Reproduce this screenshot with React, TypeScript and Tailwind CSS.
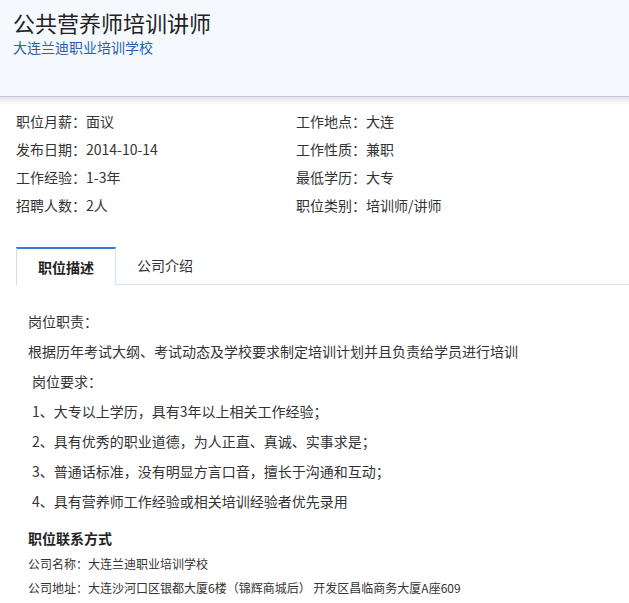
import React from "react";

const info: [string, string][] = [
  ["职位月薪：", "面议"],
  ["工作地点：", "大连"],
  ["发布日期：", "2014-10-14"],
  ["工作性质：", "兼职"],
  ["工作经验：", "1-3年"],
  ["最低学历：", "大专"],
  ["招聘人数：", "2人"],
  ["职位类别：", "培训师/讲师"],
];

const yaoqiu = [
  "1、大专以上学历，具有3年以上相关工作经验；",
  "2、具有优秀的职业道德，为人正直、真诚、实事求是；",
  "3、普通话标准，没有明显方言口音，擅长于沟通和互动；",
  "4、具有营养师工作经验或相关培训经验者优先录用",
];

export default function App() {
  return (
    <div
      className="w-[629px] h-[603px] overflow-hidden bg-white text-[#333]"
      style={{ fontFamily: '"Noto Sans CJK SC", "Liberation Sans", sans-serif' }}
    >
      {/* 头部 */}
      <div className="h-[97px] bg-[#f5f9fe] border-b border-[#bccbdb] px-[13px] pt-[7px]">
        <h1 className="text-[22px] leading-[30px] text-[#222]">公共营养师培训讲师</h1>
        <div className="text-[14px] leading-[20px] text-[#2b5fb3]">大连兰迪职业培训学校</div>
      </div>
      <div className="h-[8px] bg-gradient-to-b from-[#e6e6e6] to-white" />

      {/* 基本信息 */}
      <div className="grid grid-cols-[280px_1fr] pl-[16px] mt-[2px] text-[14px] leading-[28px]">
        {info.map(([k, v]) => (
          <div key={k}>
            {k}
            {v}
          </div>
        ))}
      </div>

      {/* 标签 */}
      <div className="flex ml-[16px] mt-[28px] border-b border-[#d3e3f6] h-[38px]">
        <div className="w-[100px] h-[38px] -mb-px bg-white border-t-2 border-t-[#3b78d0] border-l border-l-[#dcdcdc] border-r border-r-[#d3e3f6] flex items-center justify-center text-[14px] font-bold text-[#222]">
          职位描述
        </div>
        <div className="w-[98px] flex items-center justify-center text-[14px] text-[#333]">公司介绍</div>
      </div>

      {/* 描述 */}
      <div className="pl-[28px] pt-[21px] text-[14px] leading-[30px]">
        <div>岗位职责：</div>
        <div>根据历年考试大纲、考试动态及学校要求制定培训计划并且负责给学员进行培训</div>
        <div className="pl-[4px]">岗位要求：</div>
        {yaoqiu.map((t) => (
          <div key={t} className="pl-[4px]">
            {t}
          </div>
        ))}
      </div>

      {/* 联系方式 */}
      <div className="pl-[28px] mt-[8px]">
        <div className="text-[14px] leading-[28px] font-bold text-[#222]">职位联系方式</div>
        <div className="text-[12px] leading-[24px]">公司名称：大连兰迪职业培训学校</div>
        <div className="text-[12px] leading-[24px]">公司地址：大连沙河口区银都大厦6楼（锦辉商城后） 开发区昌临商务大厦A座609</div>
      </div>
    </div>
  );
}
